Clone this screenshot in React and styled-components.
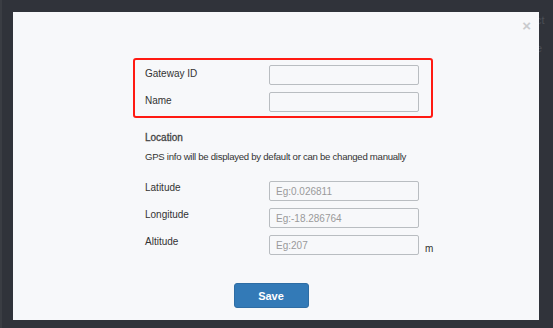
import React from 'react';
import styled, { createGlobalStyle } from 'styled-components';

const Global = createGlobalStyle`
  html, body { margin: 0; padding: 0; }
  body {
    width: 553px;
    height: 328px;
    overflow: hidden;
    background: #30333a;
    font-family: "Liberation Sans", Arial, sans-serif;
  }
`;

const Page = styled.div`
  position: relative;
  width: 553px;
  height: 328px;
  background: #30333a;
  box-shadow: inset 2px 0 0 #3a3d43;
  overflow: hidden;
`;

const Backdrop = styled.div`
  position: absolute;
  left: 530px;
  top: 14px;
  display: flex;
  flex-direction: column;
  gap: 16px;
  font-size: 11px;
  color: #4a4e55;
`;

const Modal = styled.div`
  position: absolute;
  left: 13px;
  top: 12px;
  width: 526px;
  height: 308px;
  background: #f7f8fa;
  box-sizing: border-box;
  display: flex;
  flex-direction: column;
  align-items: flex-start;
  padding: 46px 0 0 120px;
`;

const Close = styled.span`
  position: absolute;
  right: 8px;
  top: 6px;
  font-size: 15px;
  line-height: 1;
  color: #c9cbce;
  font-weight: bold;
`;

const Highlight = styled.div`
  width: 300px;
  box-sizing: border-box;
  border: 2px solid #ff1a12;
  border-radius: 3px;
  padding: 5px 12px 4px 10px;
  display: flex;
  flex-direction: column;
  gap: 7px;
`;

const Section = styled.div`
  width: 300px;
  box-sizing: border-box;
  padding: 0 12px;
  display: flex;
  flex-direction: column;
  gap: ${p => p.gap || 0}px;
  margin-top: ${p => p.top || 0}px;
`;

const Row = styled.div`
  display: flex;
  align-items: center;
  height: 20px;
`;

const Label = styled.label`
  width: 124px;
  flex-shrink: 0;
  font-size: 10px;
  color: #333;
  margin-top: ${p => (p.high ? -7 : -3)}px;
`;

const Input = styled.input`
  width: 150px;
  flex-shrink: 0;
  height: 20px;
  box-sizing: border-box;
  border: 1px solid #b9bdc1;
  border-radius: 2px;
  background: #f7f8fa;
  padding: 0 6px;
  font-family: inherit;
  font-size: 10px;
  color: #333;
  outline: none;
  &::placeholder { color: #9a9a9a; }
`;

const Unit = styled.span`
  font-size: 10px;
  color: #333;
  margin-left: 6px;
  margin-top: 6px;
`;

const Title = styled.div`
  font-size: 10px;
  color: #444;
  -webkit-text-stroke: 0.3px #444;
  line-height: 12px;
`;

const Hint = styled.div`
  font-size: 9.6px;
  letter-spacing: -0.27px;
  color: #333;
  line-height: 12px;
  white-space: nowrap;
`;

const Footer = styled.div`
  width: 300px;
  display: flex;
  justify-content: center;
  margin-top: 28px;
  padding-right: 24px;
  box-sizing: border-box;
`;

const SaveButton = styled.button`
  width: 75px;
  height: 25px;
  border: 1px solid #2e6da4;
  border-radius: 3px;
  background: #337ab7;
  color: #fff;
  font-family: inherit;
  font-size: 11px;
  font-weight: bold;
`;

const Field = ({ label, placeholder, unit, high }) => (
  <Row>
    <Label high={high}>{label}</Label>
    <Input placeholder={placeholder} />
    {unit && <Unit>{unit}</Unit>}
  </Row>
);

export default function App() {
  return (
    <>
      <Global />
      <Page>
        <Backdrop>
          <span>ect</span>
          <span>ne</span>
        </Backdrop>
        <Modal>
          <Close>×</Close>
          <Highlight>
            <Field label="Gateway ID" />
            <Field label="Name" />
          </Highlight>
          <Section top={14} gap={7}>
            <Title>Location</Title>
            <Hint>GPS info will be displayed by default or can be changed manually</Hint>
          </Section>
          <Section top={18} gap={7}>
            <Field label="Latitude" placeholder="Eg:0.026811" high />
            <Field label="Longitude" placeholder="Eg:-18.286764" high />
            <Field label="Altitude" placeholder="Eg:207" unit="m" high />
          </Section>
          <Footer>
            <SaveButton>Save</SaveButton>
          </Footer>
        </Modal>
      </Page>
    </>
  );
}
